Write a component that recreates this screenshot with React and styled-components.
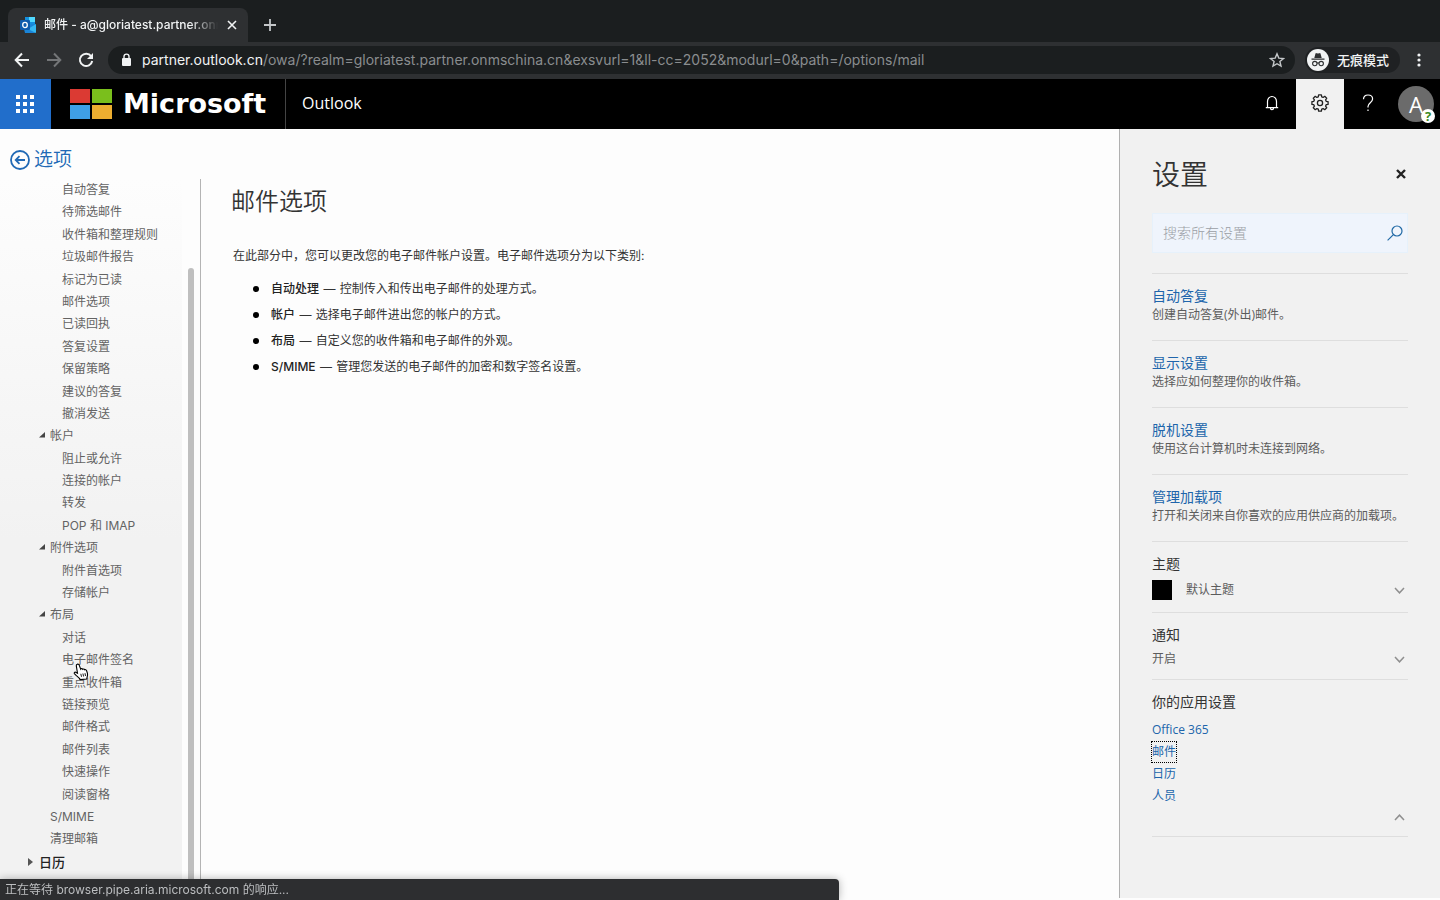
import React from "react";
import styled, { createGlobalStyle, css } from "styled-components";

const CJK = '"Noto Sans CJK SC", sans-serif';
const UI = `Inter, ${CJK}`;
const SEGOE = `"Open Sans", ${CJK}`;

const GlobalStyle = createGlobalStyle`
  *, *::before, *::after { box-sizing: border-box; }
  body { margin: 0; background: #fdfdfd; font: 12px/18px ${UI}; color: #333; }
  h1, h2, h3, p, ul { margin: 0; padding: 0; font-weight: 400; }
  ul { list-style: none; }
  button, input { font: inherit; color: inherit; }
  button { padding: 0; border: 0; background: none; cursor: pointer; }
  a { text-decoration: none; color: inherit; }
  svg { display: block; flex: none; }
`;

const Page = styled.div`
  min-height: 100vh;
  display: flex;
  flex-direction: column;
`;

/* Browser chrome */
const TabStrip = styled.div`
  height: 42px;
  padding: 8px 8px 0;
  display: flex;
  background: #1b1e1f;
`;

const Tab = styled.div`
  width: 240px;
  padding: 0 10px 0 12px;
  display: flex;
  align-items: center;
  gap: 8px;
  border-radius: 8px 8px 0 0;
  background: #2e3032;
  color: #f1f3f4;
`;

const TabTitle = styled.span`
  flex: 1;
  overflow: hidden;
  white-space: nowrap;
  font-size: 12px;
  font-weight: 500;
  mask-image: linear-gradient(90deg, #000 84%, transparent);
`;

const ChromeButton = styled.button`
  width: ${(p) => p.$w || 32}px;
  display: flex;
  align-items: center;
  justify-content: center;
  color: ${(p) => p.$color || "#f1f3f4"};
`;

const NewTab = styled(ChromeButton)`
  margin-left: 6px;
`;

const Toolbar = styled.div`
  height: 37px;
  padding: 0 10px 1px 6px;
  display: flex;
  align-items: center;
  background: #2e3032;
`;

const Omnibox = styled.div`
  flex: 1;
  min-width: 0;
  height: 28px;
  margin-left: 6px;
  padding: 0 10px 0 12px;
  display: flex;
  align-items: center;
  gap: 10px;
  border-radius: 14px;
  background: #1b1e1f;
  color: #f1f3f4;
`;

const Url = styled.div`
  flex: 1;
  overflow: hidden;
  white-space: nowrap;
  font-size: 14px;
  line-height: 20px;
  color: #8a8d8f;
`;

const Host = styled.span`
  color: #f1f3f4;
`;

const Incognito = styled.div`
  height: 26px;
  margin: 0 8px 0 10px;
  padding: 0 11px 0 2px;
  display: flex;
  align-items: center;
  gap: 8px;
  border-radius: 13px;
  background: #1f2123;
  color: #f1f3f4;
  font-size: 13px;
  font-weight: 500;
`;

/* Office suite header */
const SuiteBar = styled.header`
  height: 50px;
  display: flex;
  background: #000;
  color: #fff;
`;

const Launcher = styled.button`
  width: 51px;
  padding-right: 2px;
  display: flex;
  align-items: center;
  justify-content: center;
  background: #216ecb;
`;

const Brand = styled.a`
  width: 235px;
  padding-left: 19px;
  display: flex;
  align-items: center;
  gap: 10px;
  border-right: 1px solid #444;
`;

const Wordmark = styled.span`
  font: 700 27px/50px "DejaVu Sans", sans-serif;
`;

const AppName = styled.a`
  flex: 1;
  padding-left: 16px;
  font: 16px/48px ${SEGOE};
`;

const SuiteButton = styled.button`
  width: 48px;
  display: flex;
  align-items: center;
  justify-content: center;
  padding-bottom: 2px;
  background: ${(p) => (p.$active ? "#f1f1f1" : "transparent")};
  color: ${(p) => (p.$active ? "#222" : "#fff")};
`;

const Avatar = styled.button`
  position: relative;
  width: 36px;
  height: 36px;
  margin: 7px 6px 7px 6px;
  border-radius: 50%;
  background: #6b6b6b;
  color: #fff;
  font: 22px/36px ${SEGOE};
`;

const Presence = styled.span`
  position: absolute;
  right: -1px;
  bottom: -1px;
  width: 14px;
  height: 14px;
  border-radius: 50%;
  background: #fff;
  color: #3c8a1e;
  font: 700 13px/14px ${SEGOE};
`;

/* Options area */
const Body = styled.div`
  flex: 1;
  display: flex;
`;

const Options = styled.div`
  flex: 1;
  min-width: 0;
  display: flex;
  flex-direction: column;
`;

const BackLink = styled.a`
  height: 50px;
  padding: 12px 0 0 10px;
  display: flex;
  align-items: center;
  align-self: flex-start;
  gap: 4px;
  color: #2069b5;
  font-size: 19px;
  font-weight: 350;
  line-height: 28px;
`;

const Columns = styled.div`
  flex: 1;
  display: flex;
`;

const Nav = styled.nav`
  width: 201px;
  display: flex;
  border-right: 1px solid #b4b4b4;
`;

const NavList = styled.ul`
  flex: 1;
  padding-bottom: 27px;
  display: flex;
  flex-direction: column;
  justify-content: space-between;
  background: linear-gradient(#fdfdfd, #f2f2f2 50%);
`;

const indents = { 0: "39px", 1: "50px", 2: "62px" };

const NavItem = styled.li`
  height: 22px;
  display: flex;
  padding-left: ${(p) => indents[p.$level]};
`;

const NavLink = styled.a`
  position: relative;
  color: #636363;
  line-height: 22px;
  white-space: nowrap;
  ${(p) =>
    p.$strong &&
    css`
      color: #222;
      font-size: 13px;
      font-weight: 500;
    `}
`;

const Arrow = styled.svg`
  position: absolute;
  left: -11px;
  top: 7px;
`;

const Pointer = styled.svg`
  position: absolute;
  z-index: 1;
  left: 11px;
  top: 14px;
`;

const ScrollThumb = styled.div`
  width: 6px;
  margin: 89px 6px 0;
  border-radius: 3px 3px 0 0;
  background: #bfbfbf;
`;

const Main = styled.main`
  flex: 1;
  min-width: 0;
  padding: 6px 30px;
`;

const Title = styled.h1`
  font-size: 24px;
  line-height: 34px;
  font-weight: 350;
`;

const Intro = styled.p`
  margin: 28px 0 11px 2px;
`;

const Categories = styled.ul`
  padding-left: 40px;
`;

const Category = styled.li`
  position: relative;
  line-height: 26px;

  &::before {
    content: "";
    position: absolute;
    left: -18px;
    top: 10px;
    width: 6px;
    height: 6px;
    border-radius: 50%;
    background: #000;
  }
`;

const Term = styled.b`
  font-weight: 500;
  color: #222;
`;

const Dash = styled.span`
  padding: 0 1px;
`;

/* Settings panel */
const Panel = styled.aside`
  width: 321px;
  margin-bottom: 2px;
  padding: 24px 32px;
  border-left: 1px solid #b0b0b0;
  background: #f1f1f1;
  font-family: ${SEGOE};
`;

const PanelHead = styled.div`
  height: 42px;
  margin-bottom: 18px;
  display: flex;
  align-items: center;
  justify-content: space-between;
`;

const PanelTitle = styled.h2`
  font-size: 28px;
  font-weight: 350;
  line-height: 42px;
`;

const CloseButton = styled.button`
  width: 14px;
  height: 14px;
  display: flex;
  align-items: center;
  justify-content: center;
  color: #222;
`;

const SearchBox = styled.label`
  height: 40px;
  margin-bottom: 20px;
  padding: 0 4px 0 10px;
  display: flex;
  align-items: center;
  border: 1px solid #e6f1fb;
  background: #eff4fc;
  color: #2069a5;
`;

const SearchInput = styled.input`
  flex: 1;
  min-width: 0;
  padding: 0;
  border: 0;
  outline: 0;
  background: none;
  font-size: 14px;
  font-weight: 300;

  &::placeholder { color: #9a9ea5; opacity: 1; }
`;

const Section = styled.section`
  padding: 12px 0 ${(p) => p.$bottom || 16}px;
  border-top: 1px solid #dedede;
  color: #5c5c5c;

  &:last-child { border-bottom: 1px solid #dedede; }
`;

const SectionTitle = styled.h3`
  font-size: 14px;
  line-height: 20px;
  color: ${(p) => (p.$link ? "#2065ab" : "#333")};
`;

const ValueRow = styled.button`
  width: 100%;
  height: ${(p) => p.$h}px;
  padding-right: 3px;
  display: flex;
  align-items: center;
  gap: 14px;
`;

const Swatch = styled.span`
  width: 20px;
  height: 20px;
  background: #000;
`;

const Value = styled.span`
  flex: 1;
  text-align: left;
`;

const AppLinks = styled.ul`
  padding-top: 7px;
  color: #2065ab;
`;

const AppLinkRow = styled.li`
  height: 22px;
  line-height: 22px;
`;

const AppLink = styled.a`
  ${(p) =>
    p.$focused &&
    css`
      display: inline-block;
      height: 20px;
      line-height: 20px;
      outline: 1px dotted #000;
    `}
`;

const Collapse = styled.button`
  height: 20px;
  margin-left: auto;
  padding-right: 3px;
  display: flex;
  align-items: center;
`;

const StatusBubble = styled.div`
  position: fixed;
  left: 0;
  bottom: 0;
  width: 839px;
  max-width: 100%;
  height: 21px;
  padding-left: 5px;
  border-radius: 0 4px 0 0;
  background: #2d2e30;
  box-shadow: 0 0 8px rgba(0, 0, 0, 0.3);
  color: #bcbec0;
  font-size: 12px;
  line-height: 21px;
`;

const nav = [
  [2, "自动答复"], [2, "待筛选邮件"], [2, "收件箱和整理规则"], [2, "垃圾邮件报告"],
  [2, "标记为已读"], [2, "邮件选项"], [2, "已读回执"], [2, "答复设置"],
  [2, "保留策略"], [2, "建议的答复"], [2, "撤消发送"],
  [1, "帐户", "open"],
  [2, "阻止或允许"], [2, "连接的帐户"], [2, "转发"], [2, "POP 和 IMAP"],
  [1, "附件选项", "open"],
  [2, "附件首选项"], [2, "存储帐户"],
  [1, "布局", "open"],
  [2, "对话"], [2, "电子邮件签名", "hover"], [2, "重点收件箱"], [2, "链接预览"],
  [2, "邮件格式"], [2, "邮件列表"], [2, "快速操作"], [2, "阅读窗格"],
  [1, "S/MIME"], [1, "清理邮箱"],
  [0, "日历", "closed"],
];

const categories = [
  ["自动处理", "控制传入和传出电子邮件的处理方式。"],
  ["帐户", "选择电子邮件进出您的帐户的方式。"],
  ["布局", "自定义您的收件箱和电子邮件的外观。"],
  ["S/MIME", "管理您发送的电子邮件的加密和数字签名设置。"],
];

const quickSettings = [
  ["自动答复", "创建自动答复(外出)邮件。"],
  ["显示设置", "选择应如何整理你的收件箱。"],
  ["脱机设置", "使用这台计算机时未连接到网络。"],
  ["管理加载项", "打开和关闭来自你喜欢的应用供应商的加载项。"],
];

const Stroke = ({ size = 16, w = 2, children, ...rest }) => (
  <svg width={size} height={size} viewBox={`0 0 ${size} ${size}`} fill="none" stroke="currentColor" strokeWidth={w} aria-hidden="true" {...rest}>
    {children}
  </svg>
);

const Chevron = ({ up }) => (
  <svg width="11" height="7" viewBox="0 0 11 7" fill="none" stroke="#8f8f8f" strokeWidth="1.5" aria-hidden="true">
    <path d={up ? "M1 6 5.5 1.2 10 6" : "M1 1 5.5 5.8 10 1"} />
  </svg>
);

const OutlookIcon = () => (
  <svg width="16" height="16" viewBox="0 0 16 16" aria-hidden="true">
    <path d="M5 0h10v9H5z" fill="#1490df" />
    <path d="M9 0h6v5H9z" fill="#50d9ff" />
    <path d="M5 4h5v5H5z" fill="#0364b8" />
    <path d="M3 8l12.5-1v8a1 1 0 0 1-1 1H5z" fill="#1a84d8" />
    <path d="M16 7 8 12l8 4z" fill="#35b8f1" />
    <rect x="0" y="3" width="10" height="10" rx="1" fill="#0f5cad" />
    <ellipse cx="5" cy="8" rx="2.3" ry="2.6" fill="none" stroke="#fff" strokeWidth="1.3" />
  </svg>
);

const gearPath = (() => {
  const pts = [];
  for (let i = 0; i < 8; i++) {
    [[-0.27, 6.4], [-0.17, 8.2], [0.17, 8.2], [0.27, 6.4]].forEach(([a, r]) => {
      const t = (i * Math.PI) / 4 + a;
      pts.push(`${(9 + r * Math.sin(t)).toFixed(2)} ${(9 - r * Math.cos(t)).toFixed(2)}`);
    });
  }
  return `M${pts.join("L")}Z`;
})();

export default function App() {
  return (
    <Page lang="zh-CN">
      <GlobalStyle />
      <TabStrip>
        <Tab>
          <OutlookIcon />
          <TabTitle>邮件 - a@gloriatest.partner.onm</TabTitle>
          <ChromeButton $w={12} aria-label="关闭标签页">
            <Stroke size={10} w={1.6}><path d="M1 1l8 8M9 1l-8 8" /></Stroke>
          </ChromeButton>
        </Tab>
        <NewTab aria-label="新标签页" $color="#c4c7c9">
          <Stroke size={12} w={1.8}><path d="M6 0v12M0 6h12" /></Stroke>
        </NewTab>
      </TabStrip>

      <Toolbar>
        <ChromeButton aria-label="后退">
          <Stroke size={16} w={2}><path d="M15 8H2M8 1.5 1.7 8 8 14.5" /></Stroke>
        </ChromeButton>
        <ChromeButton aria-label="前进" $color="#747678">
          <Stroke size={16} w={2}><path d="M1 8h13M8 1.5 14.3 8 8 14.5" /></Stroke>
        </ChromeButton>
        <ChromeButton aria-label="重新加载">
          <Stroke size={16} w={2}>
            <path d="M13.2 4.3A6.2 6.2 0 1 0 14.2 9" />
            <path d="M15 1v6H9z" fill="currentColor" stroke="none" />
          </Stroke>
        </ChromeButton>
        <Omnibox>
          <svg width="12" height="14" viewBox="0 0 12 14" aria-hidden="true">
            <rect x="2" y="5" width="9" height="8" rx="1" fill="currentColor" />
            <path d="M4 6V3.6a2.5 2.5 0 0 1 5 0V6" fill="none" stroke="currentColor" strokeWidth="1.4" />
          </svg>
          <Url>
            <Host>partner.outlook.cn</Host>
            /owa/?realm=gloriatest.partner.onmschina.cn&amp;exsvurl=1&amp;ll-cc=2052&amp;modurl=0&amp;path=/options/mail
          </Url>
          <ChromeButton $w={16} $color="#c4c7c9" aria-label="为此页添加书签">
            <Stroke size={16} w={1.4}>
              <path d="M8 1.8l1.8 4.3 4.7.4-3.6 3 1.1 4.6L8 11.7l-4 2.4 1.1-4.6-3.6-3 4.7-.4z" />
            </Stroke>
          </ChromeButton>
        </Omnibox>
        <Incognito>
          <svg width="22" height="22" viewBox="0 0 22 22" aria-hidden="true">
            <circle cx="11" cy="11" r="11" fill="#f1f3f4" />
            <path d="M7.3 9 8.5 4.6q.2-.7 1-.4l1.5.4 1.5-.4q.8-.3 1 .4L14.7 9zM4.5 9.6h13v1.2h-13z" fill="#2e3032" />
            <g fill="none" stroke="#2e3032" strokeWidth="1.1">
              <circle cx="7.8" cy="14.6" r="2.2" />
              <circle cx="14.2" cy="14.6" r="2.2" />
              <path d="M10 14.2q1-.6 2 0" />
            </g>
          </svg>
          无痕模式
        </Incognito>
        <ChromeButton $w={22} aria-label="菜单">
          <svg width="4" height="14" viewBox="0 0 4 14" fill="currentColor" aria-hidden="true">
            <circle cx="2" cy="2" r="1.6" /><circle cx="2" cy="7" r="1.6" /><circle cx="2" cy="12" r="1.6" />
          </svg>
        </ChromeButton>
      </Toolbar>

      <SuiteBar>
        <Launcher aria-label="应用启动器">
          <svg width="18" height="18" viewBox="0 0 18 18" fill="#fff" aria-hidden="true">
            {[0, 7, 14].map((y) => [0, 7, 14].map((x) => <rect key={`${x}-${y}`} x={x} y={y} width="4" height="4" />))}
          </svg>
        </Launcher>
        <Brand href="#">
          <svg width="43" height="30" viewBox="0 0 43 30" aria-hidden="true">
            <rect width="20" height="14" fill="#db3a33" />
            <rect x="22" width="20" height="14" fill="#7abf1c" />
            <rect y="16" width="20" height="14" fill="#3f9fe6" />
            <rect x="22" y="16" width="20" height="14" fill="#edae30" />
          </svg>
          <Wordmark>Microsoft</Wordmark>
        </Brand>
        <AppName href="#">Outlook</AppName>
        <SuiteButton aria-label="通知">
          <Stroke size={16} w={1.2}>
            <path d="M3.5 12.5V6.5a4.5 5 0 0 1 9 0v6M1.8 12.6h12.4M6.4 12.8a1.6 1.9 0 0 0 3.2 0" />
          </Stroke>
        </SuiteButton>
        <SuiteButton $active aria-label="设置">
          <Stroke size={18} w={1.3} strokeLinejoin="round">
            <path d={gearPath} /><circle cx="9" cy="9" r="2.6" />
          </Stroke>
        </SuiteButton>
        <SuiteButton aria-label="帮助">
          <svg width="12" height="18" viewBox="0 0 12 18" fill="none" stroke="currentColor" strokeWidth="1.2" aria-hidden="true">
            <path d="M1.5 5.2C1.5 2.6 3.3 1 6 1s4.6 1.5 4.6 4c0 3.6-4.6 4-4.6 7.5v1M6 15.5v1.5" />
          </svg>
        </SuiteButton>
        <Avatar aria-label="帐户">
          A<Presence>?</Presence>
        </Avatar>
      </SuiteBar>

      <Body>
        <Options>
          <BackLink href="#">
            <Stroke size={20} w={1.8}>
              <circle cx="10" cy="10" r="9" />
              <path d="M15 10H6M9.5 6.2 5.7 10l3.8 3.8" />
            </Stroke>
            选项
          </BackLink>
          <Columns>
            <Nav aria-label="选项">
              <NavList>
                {nav.map(([level, label, state]) => (
                  <NavItem key={label} $level={level}>
                    <NavLink href="#" $strong={level === 0}>
                      {state === "open" && (
                        <Arrow width="6" height="6" viewBox="0 0 6 6"><path d="M6 0v5.5H0z" fill="#444" /></Arrow>
                      )}
                      {state === "closed" && (
                        <Arrow width="5" height="8" viewBox="0 0 5 8"><path d="M0 0l5 4-5 4z" fill="#555" /></Arrow>
                      )}
                      {label}
                      {state === "hover" && (
                        <Pointer width="18" height="18" viewBox="0 0 18 18">
                          <path
                            d="M4.2 1.3c.8-.5 1.7 0 2 .8l1.5 4c.4-.7 1.6-.7 2 .2.6-.6 1.6-.4 1.9.4.7-.4 1.6 0 1.9.8l.9 2.700c.4 1.5.2 2.6-.3 4l-.4 1.9-6.4.5c-1-1.7-2.5-2.8-4.2-4.2L1.4 10.6c-.6-.9.4-1.8 1.3-1.4l1.8 1L3.300 2.9c-.1-.7.2-1.3.9-1.6z"
                            fill="#fff" stroke="#000" strokeWidth="1.1"
                          />
                          <path d="M7.8 10.8l.7 3M9.900 10.5l.7 3M12 10.2l.5 2.8" fill="none" stroke="#000" strokeWidth="0.9" />
                        </Pointer>
                      )}
                    </NavLink>
                  </NavItem>
                ))}
              </NavList>
              <ScrollThumb />
            </Nav>
            <Main>
              <Title>邮件选项</Title>
              <Intro>在此部分中，您可以更改您的电子邮件帐户设置。电子邮件选项分为以下类别:</Intro>
              <Categories>
                {categories.map(([term, text]) => (
                  <Category key={term}><Term>{term}</Term> <Dash>—</Dash> {text}</Category>
                ))}
              </Categories>
            </Main>
          </Columns>
        </Options>

        <Panel>
          <PanelHead>
            <PanelTitle>设置</PanelTitle>
            <CloseButton aria-label="关闭">
              <Stroke size={10} w={2.4}><path d="M1 1l8 8M9 1l-8 8" /></Stroke>
            </CloseButton>
          </PanelHead>
          <SearchBox>
            <SearchInput type="text" placeholder="搜索所有设置" aria-label="搜索所有设置" />
            <Stroke size={16} w={1.2}><circle cx="10" cy="6" r="5" /><path d="M6.4 9.6.6 15.4" /></Stroke>
          </SearchBox>
          {quickSettings.map(([title, text]) => (
            <Section key={title}>
              <SectionTitle $link><a href="#">{title}</a></SectionTitle>
              <p>{text}</p>
            </Section>
          ))}
          <Section $bottom={6}>
            <SectionTitle>主题</SectionTitle>
            <ValueRow $h={32}><Swatch /><Value>默认主题</Value><Chevron /></ValueRow>
          </Section>
          <Section $bottom={6}>
            <SectionTitle>通知</SectionTitle>
            <ValueRow $h={28}><Value>开启</Value><Chevron /></ValueRow>
          </Section>
          <Section $bottom={9}>
            <SectionTitle>你的应用设置</SectionTitle>
            <AppLinks>
              <AppLinkRow><AppLink href="#">Office 365</AppLink></AppLinkRow>
              <AppLinkRow><AppLink href="#" $focused>邮件</AppLink></AppLinkRow>
              <AppLinkRow><AppLink href="#">日历</AppLink></AppLinkRow>
              <AppLinkRow><AppLink href="#">人员</AppLink></AppLinkRow>
            </AppLinks>
            <Collapse aria-label="收起"><Chevron up /></Collapse>
          </Section>
        </Panel>
      </Body>

      <StatusBubble role="status">正在等待 browser.pipe.aria.microsoft.com 的响应...</StatusBubble>
    </Page>
  );
}
